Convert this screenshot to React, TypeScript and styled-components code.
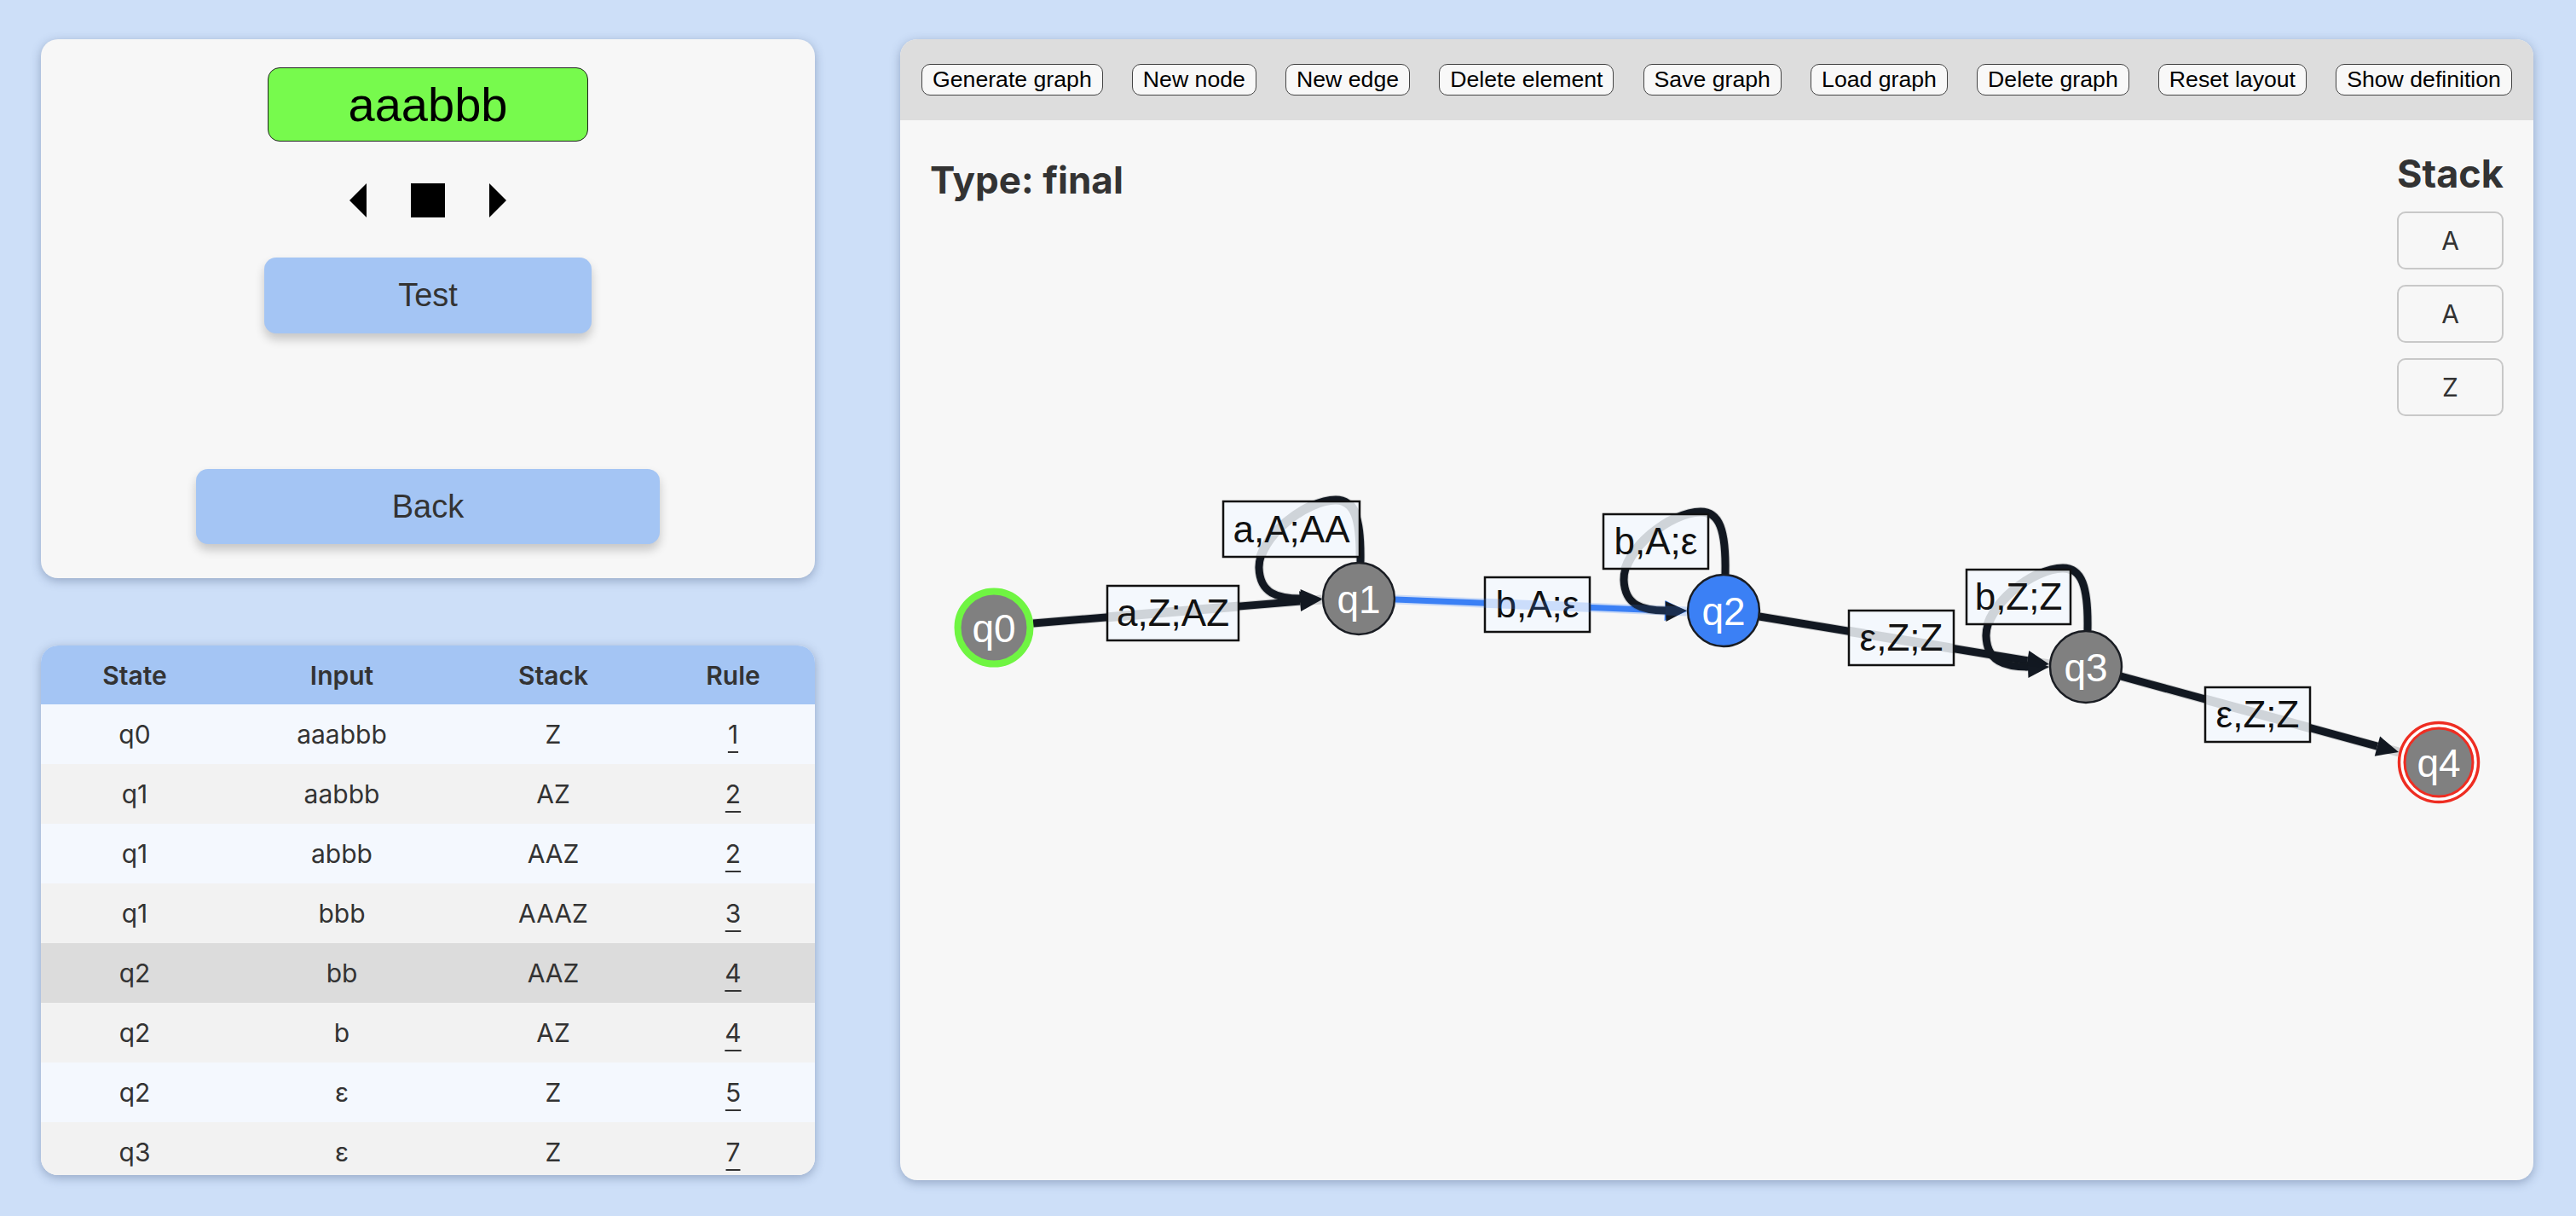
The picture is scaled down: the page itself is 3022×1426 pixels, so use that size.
import React from "react";
import styled, { createGlobalStyle } from "styled-components";

const GlobalStyle = createGlobalStyle`
  html, body { margin: 0; padding: 0; }
  body {
    background: #cddff8;
    width: 3022px;
    height: 1426px;
    overflow: hidden;
    font-family: "Liberation Sans", Arial, sans-serif;
  }
`;

const Page = styled.div`
  display: grid;
  grid-template-columns: 908px 1fr;
  column-gap: 100px;
  padding: 46px 50px 0 48px;
  box-sizing: border-box;
  width: 3022px;
  height: 1426px;
`;

const LeftColumn = styled.div`
  display: flex;
  flex-direction: column;
  gap: 79px;
`;

const Card = styled.div`
  background: #f7f7f7;
  border-radius: 20px;
  box-shadow: 0 3px 12px rgba(40, 60, 100, 0.35);
`;

const ControlCard = styled(Card)`
  height: 632px;
  box-sizing: border-box;
  padding-top: 33px;
  display: flex;
  flex-direction: column;
  align-items: center;
`;

const WordBox = styled.div`
  width: 376px;
  height: 87px;
  box-sizing: border-box;
  background: #77fa4d;
  border: 1.5px solid #222;
  border-radius: 14px;
  display: flex;
  align-items: center;
  justify-content: center;
  font-family: "Liberation Sans", Arial, sans-serif;
  font-size: 56px;
  color: #000;
`;

const Controls = styled.div`
  margin-top: 49px;
  display: flex;
  align-items: center;
  gap: 52px;
  height: 40px;
`;

const IconButton = styled.button`
  border: none;
  background: none;
  padding: 0;
  margin: 0;
  display: block;
  line-height: 0;
  cursor: pointer;
`;

const ActionButton = styled.button<{ $w: number; $h: number; $mt: number }>`
  width: ${(p) => p.$w}px;
  height: ${(p) => p.$h}px;
  margin-top: ${(p) => p.$mt}px;
  border: none;
  border-radius: 14px;
  background: #a4c5f4;
  color: #333;
  font-family: "Liberation Sans", Arial, sans-serif;
  font-size: 38px;
  box-shadow: 0 7px 12px rgba(0, 0, 0, 0.2);
  cursor: pointer;
`;

const TableCard = styled(Card)`
  height: 621px;
  overflow: hidden;
`;

const COLS = "220px 266px 230px 192px";

const HeaderRow = styled.div`
  display: grid;
  grid-template-columns: ${COLS};
  height: 69px;
  background: #a4c5f4;
  align-items: center;
  text-align: center;
  font-family: Inter, "Noto Sans", sans-serif;
  font-weight: 600;
  font-size: 30px;
  color: #333;
`;

const Row = styled.div<{ $tone: "light" | "gray" | "active" }>`
  display: grid;
  grid-template-columns: ${COLS};
  height: 70px;
  align-items: center;
  text-align: center;
  font-family: Inter, "Noto Sans", sans-serif;
  font-size: 30px;
  color: #333;
  background: ${(p) =>
    p.$tone === "active" ? "#dcdcdc" : p.$tone === "gray" ? "#f2f2f2" : "#f4f8fe"};
`;

const RuleLink = styled.span`
  text-decoration: underline;
  text-decoration-thickness: 2px;
  text-underline-offset: 9px;
`;

const GraphPanel = styled(Card)`
  height: 1338px;
  display: flex;
  flex-direction: column;
  overflow: hidden;
`;

const Toolbar = styled.div`
  height: 95px;
  flex: none;
  background: #dddddd;
  display: flex;
  align-items: center;
  justify-content: space-between;
  padding: 0 25px;
`;

const ToolButton = styled.button`
  font-family: "Liberation Sans", Arial, sans-serif;
  font-size: 26.67px;
  color: #000;
  background: #f8f8f8;
  border: 1.5px solid #444;
  border-radius: 10px;
  padding: 2px 12px;
  line-height: normal;
  cursor: pointer;
`;

const Canvas = styled.div`
  position: relative;
  flex: 1;
`;

const GraphSvg = styled.svg`
  position: absolute;
  inset: 0;
  width: 100%;
  height: 100%;
`;

const CanvasHeader = styled.div`
  position: relative;
  z-index: 1;
  display: flex;
  justify-content: space-between;
  align-items: flex-start;
  padding: 35px 35px 0 35px;
`;

const TypeTitle = styled.h2`
  margin: 8px 0 0 0;
  font-family: Inter, "Noto Sans", sans-serif;
  font-weight: 700;
  font-size: 44px;
  color: #333;
`;

const StackColumn = styled.div`
  width: 125px;
  display: flex;
  flex-direction: column;
  align-items: center;
  gap: 18px;
`;

const StackTitle = styled.h3`
  margin: 0 0 -1px 0;
  font-family: Inter, "Noto Sans", sans-serif;
  font-weight: 700;
  font-size: 45px;
  color: #333;
`;

const StackCell = styled.div`
  width: 125px;
  height: 68px;
  box-sizing: border-box;
  border: 2.5px solid #c8c8c8;
  border-radius: 10px;
  display: flex;
  align-items: center;
  justify-content: center;
  font-family: Inter, "Noto Sans", sans-serif;
  font-size: 30px;
  color: #333;
`;

const NodeLabel = styled.text`
  font-family: "Liberation Sans", Arial, sans-serif;
  font-size: 46px;
  fill: #ffffff;
`;

const EdgeLabelText = styled.text`
  font-family: "Liberation Sans", Arial, sans-serif;
  font-size: 44px;
  fill: #111;
`;

const DARK = "#131922";
const BLUE = "#3b80f5";

type Pt = [number, number];

const nodes: { id: string; cx: number; cy: number; kind?: "start" | "active" | "final" }[] = [
  { id: "q0", cx: 1166, cy: 736, kind: "start" },
  { id: "q1", cx: 1594, cy: 702 },
  { id: "q2", cx: 2022, cy: 716, kind: "active" },
  { id: "q3", cx: 2447, cy: 782 },
  { id: "q4", cx: 2861, cy: 894, kind: "final" },
];

const straightEdges: { from: Pt; to: Pt; color: string; width: number }[] = [
  { from: [1212, 731], to: [1551, 703], color: DARK, width: 9 },
  { from: [1637, 703], to: [1979, 717], color: BLUE, width: 7 },
  { from: [2064, 723], to: [2404, 779], color: DARK, width: 9 },
  { from: [2488, 793], to: [2814, 882], color: DARK, width: 9 },
];

const loops: Pt[] = [
  [1594, 702],
  [2022, 716],
  [2447, 782],
];

const labels: { x: number; y: number; w: number; h: number; text: string }[] = [
  { x: 1299, y: 687, w: 154, h: 64, text: "a,Z;AZ" },
  { x: 1435, y: 588, w: 160, h: 65, text: "a,A;AA" },
  { x: 1742, y: 677, w: 123, h: 64, text: "b,A;ε" },
  { x: 1881, y: 603, w: 123, h: 64, text: "b,A;ε" },
  { x: 2169, y: 716, w: 123, h: 64, text: "ε,Z;Z" },
  { x: 2307, y: 668, w: 122, h: 64, text: "b,Z;Z" },
  { x: 2587, y: 806, w: 123, h: 64, text: "ε,Z;Z" },
];

function arrow(from: Pt, to: Pt, len = 26, half = 12) {
  const dx = to[0] - from[0];
  const dy = to[1] - from[1];
  const d = Math.hypot(dx, dy);
  const ux = dx / d;
  const uy = dy / d;
  const bx = to[0] - ux * len;
  const by = to[1] - uy * len;
  const nx = -uy;
  const ny = ux;
  return {
    base: [bx, by] as Pt,
    points: `${to[0]},${to[1]} ${bx + nx * half},${by + ny * half} ${bx - nx * half},${by - ny * half}`,
  };
}

function loopPath(cx: number, cy: number) {
  return `M ${cx + 2} ${cy - 43} C ${cx + 3} ${cy - 95} ${cx - 5} ${cy - 116} ${cx - 27} ${cy - 116} C ${cx - 62} ${cy - 116} ${cx - 118} ${cy - 72} ${cx - 117} ${cy - 36} C ${cx - 116} ${cy - 6} ${cx - 95} ${cy} ${cx - 68} ${cy}`;
}

function Graph() {
  return (
    <GraphSvg viewBox="1056 141 1916 1243" preserveAspectRatio="none">
      {straightEdges.map((e, i) => {
        const a = arrow(e.from, e.to);
        return (
          <g key={`e${i}`}>
            <line
              x1={e.from[0]}
              y1={e.from[1]}
              x2={a.base[0]}
              y2={a.base[1]}
              stroke={e.color}
              strokeWidth={e.width}
            />
            <polygon points={a.points} fill={e.color} />
          </g>
        );
      })}
      {loops.map(([cx, cy], i) => {
        const a = arrow([cx - 70, cy + 1], [cx - 43, cy], 25, 12);
        return (
          <g key={`l${i}`}>
            <path d={loopPath(cx, cy)} fill="none" stroke={DARK} strokeWidth={9} strokeLinecap="round" />
            <polygon points={a.points} fill={DARK} />
          </g>
        );
      })}
      {nodes.map((n) => (
        <g key={n.id}>
          {n.kind === "final" ? (
            <>
              <circle cx={n.cx} cy={n.cy} r={46.5} fill="#ffffff" stroke="#ee2d22" strokeWidth={3.5} />
              <circle cx={n.cx} cy={n.cy} r={40} fill="#808080" stroke="#ee2d22" strokeWidth={3} />
            </>
          ) : n.kind === "start" ? (
            <circle cx={n.cx} cy={n.cy} r={42.5} fill="#808080" stroke="#6ff542" strokeWidth={8} />
          ) : (
            <circle
              cx={n.cx}
              cy={n.cy}
              r={42}
              fill={n.kind === "active" ? BLUE : "#808080"}
              stroke="#1a1d23"
              strokeWidth={2.5}
            />
          )}
          <NodeLabel x={n.cx} y={n.cy + 17} textAnchor="middle">
            {n.id}
          </NodeLabel>
        </g>
      ))}
      {labels.map((l, i) => (
        <g key={`t${i}`}>
          <rect x={l.x} y={l.y} width={l.w} height={l.h} fill="#f4f8fd" stroke="#111" strokeWidth={2.5} />
          <EdgeLabelText x={l.x + l.w / 2} y={l.y + l.h / 2 + 15} textAnchor="middle">
            {l.text}
          </EdgeLabelText>
        </g>
      ))}
      {straightEdges.map((e, i) => (
        <line
          key={`g${i}`}
          x1={e.from[0]}
          y1={e.from[1]}
          x2={e.to[0]}
          y2={e.to[1]}
          stroke={e.color === BLUE ? BLUE : DARK}
          strokeOpacity={e.color === BLUE ? 0.22 : 0.16}
          strokeWidth={11}
        />
      ))}
      {loops.map(([cx, cy], i) => (
        <path
          key={`gl${i}`}
          d={loopPath(cx, cy)}
          fill="none"
          stroke={DARK}
          strokeOpacity={0.16}
          strokeWidth={11}
        />
      ))}
    </GraphSvg>
  );
}

const rows: { state: string; input: string; stack: string; rule: string; active?: boolean }[] = [
  { state: "q0", input: "aaabbb", stack: "Z", rule: "1" },
  { state: "q1", input: "aabbb", stack: "AZ", rule: "2" },
  { state: "q1", input: "abbb", stack: "AAZ", rule: "2" },
  { state: "q1", input: "bbb", stack: "AAAZ", rule: "3" },
  { state: "q2", input: "bb", stack: "AAZ", rule: "4", active: true },
  { state: "q2", input: "b", stack: "AZ", rule: "4" },
  { state: "q2", input: "ε", stack: "Z", rule: "5" },
  { state: "q3", input: "ε", stack: "Z", rule: "7" },
];

const tools = [
  "Generate graph",
  "New node",
  "New edge",
  "Delete element",
  "Save graph",
  "Load graph",
  "Delete graph",
  "Reset layout",
  "Show definition",
];

export default function App() {
  return (
    <>
      <GlobalStyle />
      <Page>
        <LeftColumn>
          <ControlCard>
            <WordBox>aaabbb</WordBox>
            <Controls>
              <IconButton aria-label="previous">
                <svg width="20" height="40" viewBox="0 0 20 40">
                  <polygon points="20,0 20,40 0,20" fill="#000" />
                </svg>
              </IconButton>
              <IconButton aria-label="stop">
                <svg width="40" height="40" viewBox="0 0 40 40">
                  <rect x="0" y="0" width="40" height="40" fill="#000" />
                </svg>
              </IconButton>
              <IconButton aria-label="next">
                <svg width="20" height="40" viewBox="0 0 20 40">
                  <polygon points="0,0 20,20 0,40" fill="#000" />
                </svg>
              </IconButton>
            </Controls>
            <ActionButton $w={384} $h={89} $mt={47}>
              Test
            </ActionButton>
            <ActionButton $w={544} $h={88} $mt={159}>
              Back
            </ActionButton>
          </ControlCard>
          <TableCard>
            <HeaderRow>
              <span>State</span>
              <span>Input</span>
              <span>Stack</span>
              <span>Rule</span>
            </HeaderRow>
            {rows.map((r, i) => (
              <Row key={i} $tone={r.active ? "active" : i % 2 === 0 ? "light" : "gray"}>
                <span>{r.state}</span>
                <span>{r.input}</span>
                <span>{r.stack}</span>
                <span>
                  <RuleLink>{r.rule}</RuleLink>
                </span>
              </Row>
            ))}
          </TableCard>
        </LeftColumn>
        <GraphPanel>
          <Toolbar>
            {tools.map((t) => (
              <ToolButton key={t}>{t}</ToolButton>
            ))}
          </Toolbar>
          <Canvas>
            <Graph />
            <CanvasHeader>
              <TypeTitle>Type: final</TypeTitle>
              <StackColumn>
                <StackTitle>Stack</StackTitle>
                <StackCell>A</StackCell>
                <StackCell>A</StackCell>
                <StackCell>Z</StackCell>
              </StackColumn>
            </CanvasHeader>
          </Canvas>
        </GraphPanel>
      </Page>
    </>
  );
}
